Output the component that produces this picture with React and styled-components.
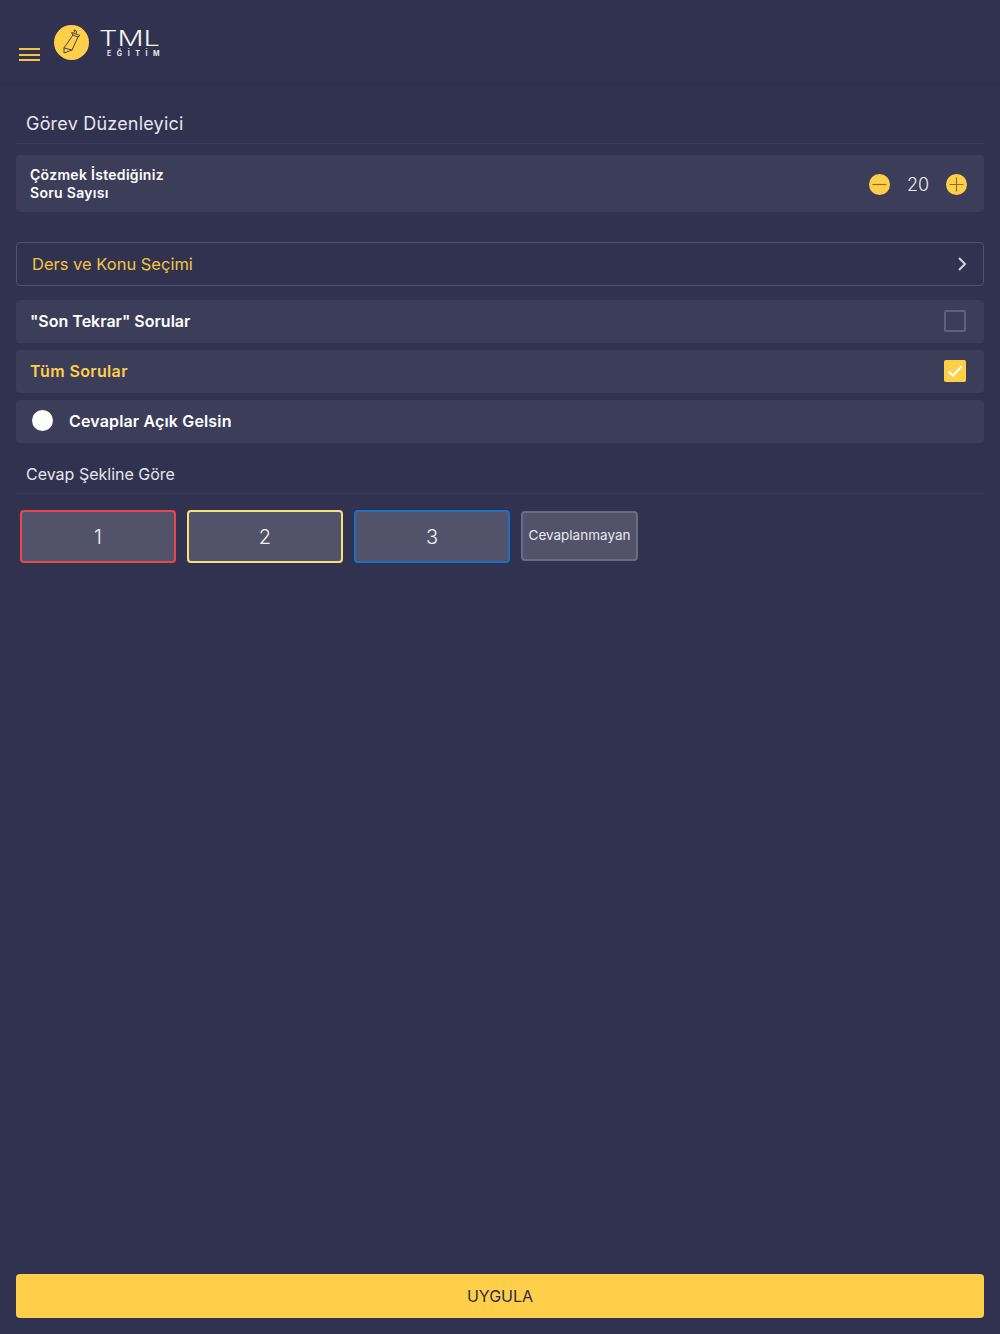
import React from "react";
import styled, { createGlobalStyle } from "styled-components";

const GlobalStyle = createGlobalStyle`
  html, body {
    margin: 0;
    padding: 0;
    background: #31324f;
  }
  * {
    box-sizing: border-box;
  }
`;

const Page = styled.div`
  display: flex;
  flex-direction: column;
  height: 1334px;
  background: #31324f;
  color: #fff;
  font-family: Inter, "Open Sans", sans-serif;
`;

const Header = styled.header`
  display: flex;
  align-items: flex-start;
  height: 83px;
  padding: 25px 0 0 19px;
  border-bottom: 1px solid #2f3049;
  box-shadow: 0 1px 2px rgba(30, 30, 50, 0.15);
`;

const MenuButton = styled.div`
  display: flex;
  flex-direction: column;
  gap: 3.5px;
  width: 21px;
  margin-top: 23px;
  margin-right: 14px;
`;

const MenuLine = styled.span`
  display: block;
  height: 2px;
  background: #f5c344;
`;

const LogoBadge = styled.div`
  display: flex;
  align-items: center;
  justify-content: center;
  width: 35px;
  height: 35px;
  border-radius: 50%;
  background: #ffcf4a;
`;

const LogoText = styled.div`
  display: flex;
  flex-direction: column;
  align-items: flex-start;
  width: 61px;
  margin: 3px 0 0 10px;
`;

const LogoName = styled.div`
  font-size: 21px;
  line-height: 21px;
  font-weight: 300;
  color: #f4f4f6;
  transform: scaleX(1.38);
  transform-origin: left center;
`;

const LogoSub = styled.div`
  margin-left: 8px;
  font-size: 7px;
  line-height: 9px;
  font-weight: 700;
  letter-spacing: 5.6px;
  white-space: nowrap;
  color: #e8e8ee;
`;

const Content = styled.main`
  display: flex;
  flex-direction: column;
  flex: 1;
  padding: 0 16px;
`;

const SectionTitle = styled.h2`
  margin: ${(p) => p.$top}px 0 0;
  height: ${(p) => p.$height}px;
  padding: ${(p) => p.$pad}px 0 0 10px;
  font-size: ${(p) => p.$size}px;
  line-height: 26px;
  font-weight: 400;
  letter-spacing: ${(p) => p.$spacing}px;
  color: #e6e6ec;
  border-bottom: 1px solid #3b3c58;
`;

const StepperCard = styled.section`
  display: flex;
  align-items: center;
  justify-content: space-between;
  height: 57px;
  margin-top: 11px;
  padding: 0 17px 0 14px;
  background: #3c3d59;
  border-radius: 4px;
`;

const StepperLabel = styled.div`
  font-size: 14px;
  line-height: 18px;
  font-weight: 600;
  letter-spacing: 0.3px;
  color: #fff;
`;

const Stepper = styled.div`
  display: flex;
  align-items: center;
  padding-top: 1px;
`;

const StepButton = styled.div`
  display: flex;
  align-items: center;
  justify-content: center;
  width: 21px;
  height: 21px;
  border-radius: 50%;
  background: #ffcf4a;
`;

const StepValue = styled.div`
  width: 56px;
  text-align: center;
  font-size: 18px;
  font-weight: 300;
  color: #ecedf2;
`;

const SelectRow = styled.div`
  display: flex;
  align-items: center;
  justify-content: space-between;
  height: 44px;
  margin-top: 30px;
  padding: 0 16px 1px 15px;
  border: 1px solid #50516c;
  border-radius: 4px;
  font-size: 16.5px;
  color: #f5c344;
`;

const OptionRow = styled.div`
  display: flex;
  align-items: center;
  justify-content: space-between;
  height: 43px;
  margin-top: ${(p) => p.$top}px;
  padding: 0 18px 2px 14px;
  background: #3c3d59;
  border-radius: 4px;
  font-size: 16px;
  font-weight: 600;
  letter-spacing: ${(p) => p.$spacing || 0}px;
  color: ${(p) => (p.$active ? "#ffcf4a" : "#fff")};
`;

const CheckBox = styled.div`
  display: flex;
  align-items: center;
  justify-content: center;
  width: 22px;
  height: 22px;
  border-radius: 2px;
  background: ${(p) => (p.$checked ? "#ffcf4a" : "transparent")};
  border: ${(p) => (p.$checked ? "none" : "2px solid #60607a")};
`;

const ToggleLabel = styled.div`
  display: flex;
  align-items: center;
  gap: 16px;
  padding-left: 2px;
`;

const ToggleKnob = styled.span`
  width: 21px;
  height: 21px;
  border-radius: 50%;
  background: #fff;
`;

const AnswerRow = styled.div`
  display: flex;
  align-items: flex-start;
  gap: 11px;
  margin-top: 16px;
  padding-left: 4px;
`;

const AnswerButton = styled.div`
  display: flex;
  align-items: center;
  justify-content: center;
  width: 156px;
  height: 53px;
  padding-top: 1px;
  background: #52526a;
  border: 2px solid ${(p) => p.$color};
  border-radius: 4px;
  font-size: 20px;
  font-weight: 300;
  color: #f2f2f5;
`;

const UnansweredButton = styled.div`
  display: flex;
  align-items: center;
  justify-content: center;
  width: 117px;
  height: 50px;
  margin-top: 1px;
  padding-bottom: 3px;
  background: #52526a;
  border: 2px solid #6b6b82;
  border-radius: 4px;
  font-size: 13.5px;
  color: #e9e9ee;
`;

const Footer = styled.footer`
  padding: 0 16px 16px;
`;

const ApplyButton = styled.div`
  display: flex;
  align-items: center;
  justify-content: center;
  height: 44px;
  background: #ffcf4a;
  border-radius: 4px;
  font-size: 16px;
  color: #2b2c45;
`;

const PencilIcon = () => (
  <svg width="35" height="35" viewBox="0 0 35 35" fill="none" stroke="#44444c" strokeWidth="1" strokeLinejoin="round" strokeLinecap="round">
    <path d="M19 10 L10 23 L10 28 L18 25 L24 12" />
    <path d="M10 23 L18 25" />
    <path d="M18 7.5 L26 10.5 L24 12 L19 10 Z" />
    <path d="M20.5 7 L20 5 L22 5.5 L22.5 8" />
  </svg>
);

const MinusIcon = () => (
  <svg width="15" height="15" viewBox="0 0 15 15" stroke="#8a6f2c" strokeWidth="1.2">
    <path d="M0.5 7.5 H14.5" />
  </svg>
);

const PlusIcon = () => (
  <svg width="15" height="15" viewBox="0 0 15 15" stroke="#8a6f2c" strokeWidth="1.2">
    <path d="M0.5 7.5 H14.5 M7.5 0.5 V14.5" />
  </svg>
);

const ChevronIcon = () => (
  <svg width="10" height="14" viewBox="0 0 10 14" fill="none" stroke="#d2d2da" strokeWidth="2">
    <path d="M2 1 L8 7 L2 13" />
  </svg>
);

const CheckIcon = () => (
  <svg width="16" height="12" viewBox="0 0 16 12" fill="none" stroke="#fff" strokeWidth="2.2">
    <path d="M1.5 6.5 L6 10.5 L14.5 1.5" />
  </svg>
);

const answers = [
  { label: "1", color: "#e5484d" },
  { label: "2", color: "#f7df7c" },
  { label: "3", color: "#1f6fc4" },
];

const App = () => (
  <Page>
    <GlobalStyle />
    <Header>
      <MenuButton>
        <MenuLine />
        <MenuLine />
        <MenuLine />
      </MenuButton>
      <LogoBadge>
        <PencilIcon />
      </LogoBadge>
      <LogoText>
        <LogoName>TML</LogoName>
        <LogoSub>EĞİTİM</LogoSub>
      </LogoText>
    </Header>
    <Content>
      <SectionTitle $top={27} $height={34} $pad={1} $size={18} $spacing={0.2}>Görev Düzenleyici</SectionTitle>
      <StepperCard>
        <StepperLabel>
          Çözmek İstediğiniz
          <br />
          Soru Sayısı
        </StepperLabel>
        <Stepper>
          <StepButton>
            <MinusIcon />
          </StepButton>
          <StepValue>20</StepValue>
          <StepButton>
            <PlusIcon />
          </StepButton>
        </Stepper>
      </StepperCard>
      <SelectRow>
        Ders ve Konu Seçimi
        <ChevronIcon />
      </SelectRow>
      <OptionRow $top={14}>
        "Son Tekrar" Sorular
        <CheckBox />
      </OptionRow>
      <OptionRow $top={7} $active $spacing={0.35}>
        Tüm Sorular
        <CheckBox $checked>
          <CheckIcon />
        </CheckBox>
      </OptionRow>
      <OptionRow $top={7} $spacing={0.15}>
        <ToggleLabel>
          <ToggleKnob />
          Cevaplar Açık Gelsin
        </ToggleLabel>
      </OptionRow>
      <SectionTitle $top={18} $height={33} $pad={0} $size={16} $spacing={0}>Cevap Şekline Göre</SectionTitle>
      <AnswerRow>
        {answers.map((a) => (
          <AnswerButton key={a.label} $color={a.color}>
            {a.label}
          </AnswerButton>
        ))}
        <UnansweredButton>Cevaplanmayan</UnansweredButton>
      </AnswerRow>
    </Content>
    <Footer>
      <ApplyButton>UYGULA</ApplyButton>
    </Footer>
  </Page>
);

export default App;
